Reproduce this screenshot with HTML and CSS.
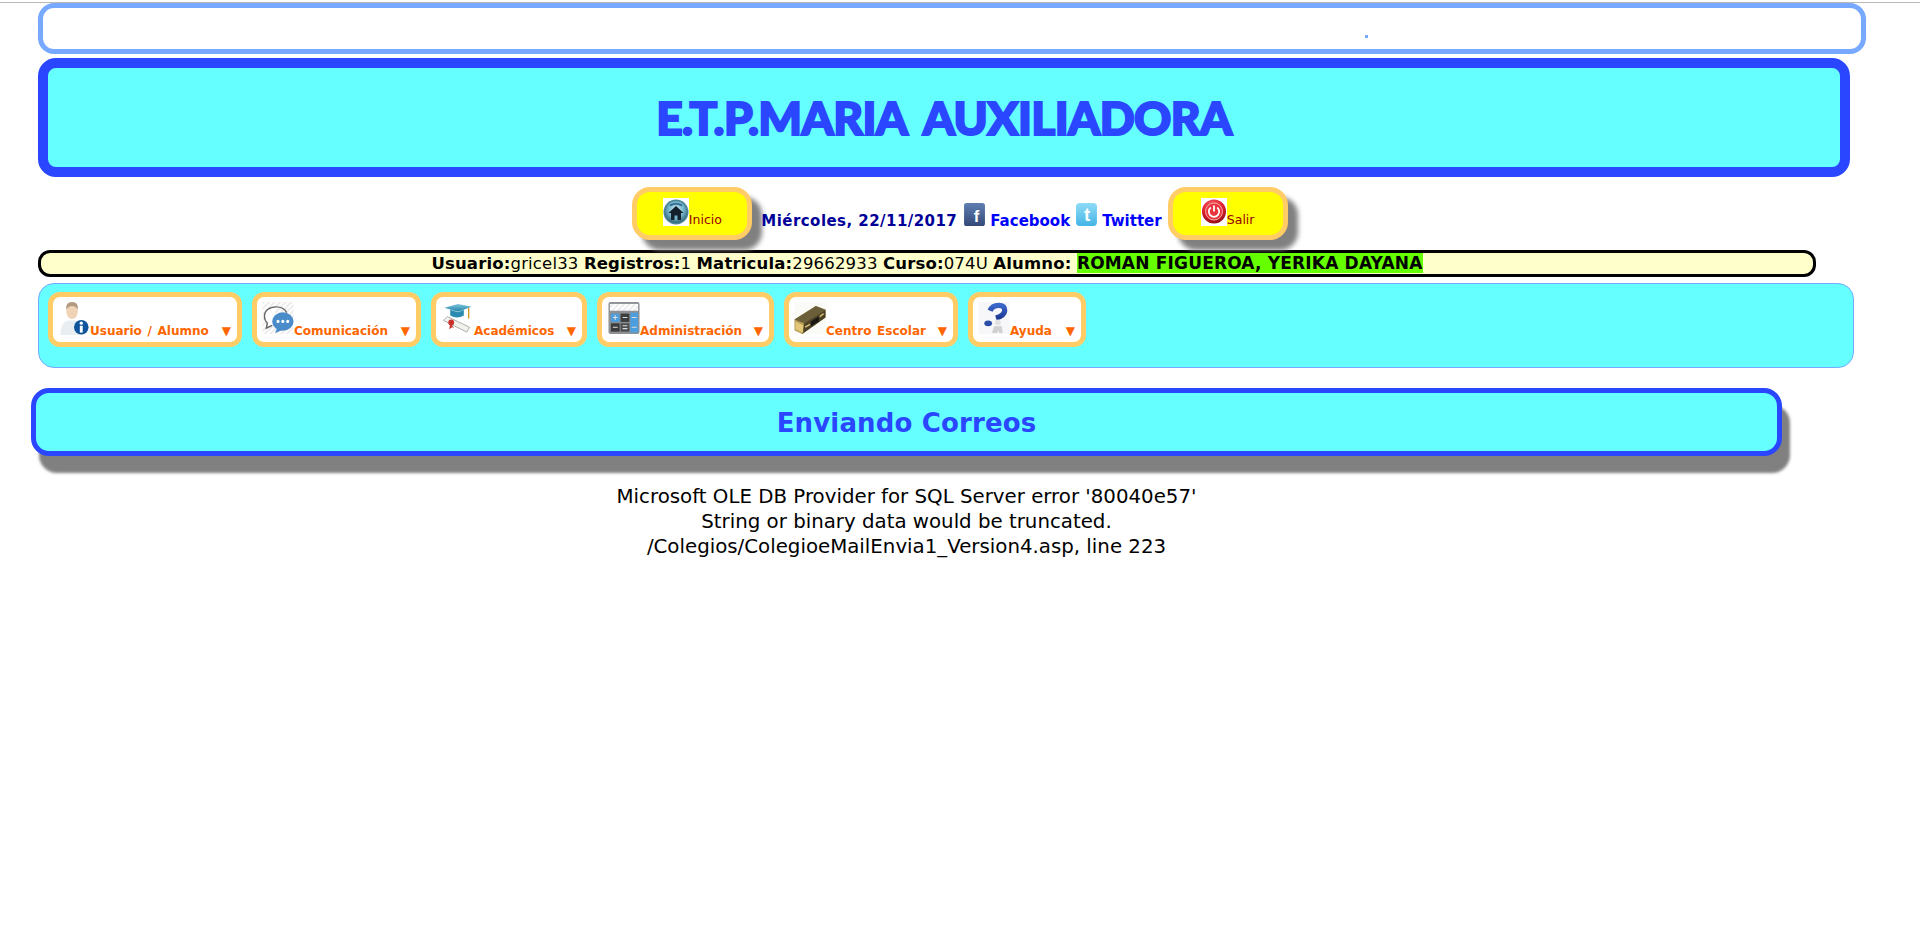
FILE: index.html
```html
<!DOCTYPE html>
<html lang="es">
<head>
<meta charset="utf-8">
<title>E.T.P. Maria Auxiliadora</title>
<link rel="stylesheet" href="styles.css">
</head>
<body>
<svg class="defs" width="0" height="0" aria-hidden="true">
  <defs>
    <radialGradient id="gHome" cx="50%" cy="40%" r="60%"><stop offset="0" stop-color="#d4eef5"/><stop offset=".6" stop-color="#6fb2c8"/><stop offset="1" stop-color="#2f6478"/></radialGradient>
    <radialGradient id="gOff" cx="45%" cy="30%" r="70%"><stop offset="0" stop-color="#f4747a"/><stop offset=".6" stop-color="#e0202c"/><stop offset="1" stop-color="#8f0d14"/></radialGradient>
    <linearGradient id="gFb" x1="0" y1="0" x2="0" y2="1"><stop offset="0" stop-color="#5f7fb0"/><stop offset="1" stop-color="#34497a"/></linearGradient>
    <linearGradient id="gTw" x1="0" y1="0" x2="0" y2="1"><stop offset="0" stop-color="#8fdcf6"/><stop offset="1" stop-color="#45b4e6"/></linearGradient>
    <linearGradient id="gCap" x1="0" y1="0" x2="0" y2="1"><stop offset="0" stop-color="#7fc8dc"/><stop offset="1" stop-color="#1f7fa6"/></linearGradient>
    <linearGradient id="gQ" x1="0" y1="0" x2="0" y2="1"><stop offset="0" stop-color="#3b66c9"/><stop offset="1" stop-color="#1c3a94"/></linearGradient>
    <pattern id="hatch" width="4" height="4" patternUnits="userSpaceOnUse" patternTransform="rotate(45)"><rect width="4" height="4" fill="#fff"/><rect width="2" height="4" fill="#ececec"/></pattern>
  </defs>
</svg>
<div class="page">
  <div class="ticker"><span class="ticker-dot"></span></div>
  <header class="banner"><h1 class="banner-title">E.T.P.MARIA AUXILIADORA</h1></header>

  <div class="toolbar">
    <a class="pill"><svg class="pill-icon" viewBox="0 0 26 28"><rect width="26" height="28" fill="#fff"/><circle cx="13" cy="14" r="12.5" fill="#4d8497"/><circle cx="13" cy="14" r="11" fill="url(#gHome)"/><path d="M13 8 5.500 15H8v7h10v-7h2.500z" fill="#14202b"/><rect x="11.500" y="17.500" width="3" height="4.500" fill="#6fb2c8"/><path d="M7 7.500q6-3.500 12 0" stroke="#2c5f8f" stroke-width="1.500" fill="none"/></svg><span class="pill-label">Inicio</span></a>
    <span class="date">Miércoles, 22/11/2017</span>
    <svg class="social social-fb" viewBox="0 0 20 22"><rect width="20" height="22" rx="2.500" fill="url(#gFb)"/><text x="12" y="18" class="social-letter" text-anchor="middle">f</text></svg>
    <a class="social-link">Facebook</a>
    <svg class="social" viewBox="0 0 20 22"><rect width="20" height="22" rx="3.500" fill="url(#gTw)"/><text x="10.500" y="17.500" class="social-letter social-letter-t" text-anchor="middle">t</text></svg>
    <a class="social-link">Twitter</a>
    <a class="pill"><svg class="pill-icon" viewBox="0 0 26 28"><rect width="26" height="28" fill="#fff"/><circle cx="13" cy="13.500" r="12" fill="url(#gOff)"/><circle cx="13" cy="13.500" r="8.500" fill="#e8353e" stroke="#f7a5a8" stroke-width="1"/><path d="M9.800 9.500a5.200 5.200 0 1 0 6.400 0" stroke="#fff" stroke-width="1.800" fill="none"/><path d="M13 7.500v6" stroke="#fff" stroke-width="1.800"/></svg><span class="pill-label">Salir</span></a>
  </div>

  <div class="userbar"><b>Usuario:</b>gricel33 <b>Registros:</b>1 <b>Matricula:</b>29662933 <b>Curso:</b>074U <b>Alumno:</b> <b class="student">ROMAN FIGUEROA, YERIKA DAYANA</b></div>

  <nav class="menu">
    <a class="menu-item item-user"><svg class="menu-icon" viewBox="0 0 32 34"><ellipse cx="14" cy="9.500" rx="6" ry="8" fill="#f0d3b6"/><path d="M8 8q-1-8 6-8t6 8q-2-4-6-4T8 8z" fill="#b09a80"/><path d="M2 34q0-14 9-15h6q9 1 9 15z" fill="#e9eef3"/><circle cx="23.500" cy="26" r="7.500" fill="#0f559e"/><circle cx="23.500" cy="21.800" r="1.700" fill="#fff"/><rect x="22" y="24.500" width="3" height="7" fill="#fff"/></svg><span class="menu-label">Usuario / Alumno</span><span class="menu-arrow">▼</span></a>
    <a class="menu-item item-comm"><svg class="menu-icon" viewBox="0 0 32 34"><rect width="32" height="33" fill="url(#hatch)"/><path d="M14 5C7 5 2 9 2 15c0 3 1 5 3 7l-1 5 6-3" fill="#fff" stroke="#666" stroke-width="1.500"/><path d="M14 5c5 0 9 2 11 6" fill="none" stroke="#666" stroke-width="1.500"/><ellipse cx="21" cy="20" rx="11" ry="9.500" fill="#4a8cc9"/><path d="M15 27l-2 5 7-3z" fill="#4a8cc9"/><circle cx="16" cy="20" r="1.600" fill="#fff"/><circle cx="21" cy="20" r="1.600" fill="#fff"/><circle cx="26" cy="20" r="1.600" fill="#fff"/></svg><span class="menu-label">Comunicación</span><span class="menu-arrow">▼</span></a>
    <a class="menu-item item-acad"><svg class="menu-icon" viewBox="0 0 32 34"><path d="M1 19l24 12 3-5-23-11z" fill="#f2f2ec" stroke="#999" stroke-width=".8"/><circle cx="9" cy="21" r="3" fill="#c9302c"/><path d="M8 22l-1 6 3-2 2 1z" fill="#c9302c"/><path d="M2 6 16 2l14 3-14 5z" fill="url(#gCap)"/><path d="M8 8v6q7 4 14 0V8l-6 2.500z" fill="#2b8ab0"/><path d="M27 6v11" stroke="#d19a1f" stroke-width="1.400"/></svg><span class="menu-label">Académicos</span><span class="menu-arrow">▼</span></a>
    <a class="menu-item item-admin"><svg class="menu-icon" viewBox="0 0 32 34"><rect width="32" height="33" rx="2" fill="#8e9296"/><rect x="1.500" y="2" width="29" height="7" fill="url(#hatch)"/><rect x="1.500" y="11" width="21" height="20.500" fill="#8a8d90"/><rect x="22.500" y="11" width="8" height="20.500" fill="#4d9ede"/><rect x="2.500" y="12" width="9" height="8.500" fill="#4d9ede"/><rect x="12.500" y="12" width="9" height="8.500" fill="#3a3c3e"/><rect x="2.500" y="22" width="9" height="8.500" fill="#3a3c3e"/><rect x="12.500" y="22" width="9" height="8.500" fill="#4a4c4e"/><path d="M4.500 16h5M7 13.700v4.600M14.500 16h5M4.500 26h5M14.500 24.500h5M14.500 27.500h5M24 16h5M24 26h5" stroke="#ddd" stroke-width="1.200"/></svg><span class="menu-label">Administración</span><span class="menu-arrow">▼</span></a>
    <a class="menu-item item-school"><svg class="menu-icon" viewBox="0 0 32 34"><rect width="32" height="33" fill="#fafaf6"/><path d="M0 18 22 4l10 4v8L8 33 0 29z" fill="#b59b52"/><path d="M0 18 22 4l10 4L10 22z" fill="#6b5f3a"/><path d="M10 22l22-14v8L8 33z" fill="#4a4128"/><path d="M1 20l8 4v8l-8-4z" fill="#e0c878"/><path d="M17 20l8-5v5l-8 5z" fill="#191712"/><path d="M11 26l5-3M26 15l4-3" stroke="#d8c070" stroke-width="1.500"/></svg><span class="menu-label">Centro Escolar</span><span class="menu-arrow">▼</span></a>
    <a class="menu-item item-help"><svg class="menu-icon" viewBox="0 0 32 34"><rect width="32" height="33" fill="#f7f7f9"/><path d="M12 9Q14 3.500 21 3.500 27.500 3.500 27 9 26.500 14 18 16.500" fill="none" stroke="url(#gQ)" stroke-width="5.500"/><ellipse cx="10" cy="22" rx="4" ry="3" fill="#2a4ea8"/><circle cx="20" cy="21" r="3" fill="#e2e2e2"/><path d="M16 25h8l1 7h-4v-3l-2 3h-5z" fill="#d0d0d0"/></svg><span class="menu-label">Ayuda</span><span class="menu-arrow">▼</span></a>
  </nav>

  <section class="heading"><h2 class="heading-title">Enviando Correos</h2></section>

  <div class="error">
    <p>Microsoft OLE DB Provider for SQL Server error '80040e57'</p>
    <p>String or binary data would be truncated.</p>
    <p>/Colegios/ColegioeMailEnvia1_Version4.asp, line 223</p>
  </div>
</div>
</body>
</html>
```

FILE: styles.css
```css
* { box-sizing: border-box; }
html, body { margin: 0; padding: 0; background: #fff; }
body { font-family: "DejaVu Sans", Verdana, sans-serif; color: #000; height: 952px; overflow: hidden; border-top: 2px solid #fff; }
.defs { position: absolute; }
.page { border-top: 1px solid #b9b9b9; padding-left: 31px; height: 950px; }

.ticker { width: 1828px; height: 51px; margin-left: 7px; border: 5px solid #76a9ff; border-radius: 16px; background: #fff; display: flex; align-items: flex-end; padding-left: 1322px; padding-bottom: 11px; }
.ticker-dot { width: 3px; height: 3px; background: #76a9ff; display: block; }

.banner { width: 1812px; height: 119px; margin: 4px 0 0 7px; border: 10px solid #2a47ff; border-radius: 18px; background: #66ffff; display: flex; align-items: center; justify-content: center; }
.banner-title { margin: 0; font-family: Lato, "DejaVu Sans", sans-serif; font-weight: 900; font-size: 46px; line-height: 1; letter-spacing: -.6px; word-spacing: 8px; -webkit-text-stroke: 2px #2a47ff; color: #2a47ff; white-space: nowrap; }

.toolbar { width: 1844px; margin: 10px 0 0 7px; display: flex; justify-content: center; align-items: flex-start; height: 63px; }
.pill { width: 120px; height: 53px; flex: none; border: 5px solid #ffcc66; border-radius: 18px; background: #ffff00; box-shadow: 10px 10px 5px #808080; display: flex; justify-content: center; align-items: flex-end; padding-bottom: 8px; }
.pill-icon { width: 26px; height: 28px; display: block; margin-bottom: 1px; }
.pill-label { font-size: 12.500px; line-height: 14px; color: #990000; font-family: "DejaVu Sans", sans-serif; }
.date { font-size: 15px; letter-spacing: .45px; font-weight: 700; color: #000099; margin: 25px 7px 0 9px; line-height: 18px; white-space: nowrap; }
.social { width: 21px; height: 23px; flex: none; margin-top: 16px; }
.social-letter { font-family: "Liberation Sans", sans-serif; font-weight: 700; font-size: 16px; fill: #fff; }
.social-letter-t { font-size: 18px; }
.social-link { font-size: 15px; font-weight: 700; color: #0000ff; margin: 25px 6px 0 5px; line-height: 18px; white-space: nowrap; }

.userbar { width: 1778px; height: 27px; margin: 0 0 0 7px; border: 3px solid #000; border-radius: 12px; background: #ffffcc; text-align: center; font-size: 16.500px; letter-spacing: .16px; line-height: 21px; white-space: nowrap; }
.student { background: #66ff00; font-size: 17px; letter-spacing: .18px; }

.menu { width: 1816px; height: 85px; margin: 6px 0 0 7px; border: 1px solid #76a9ff; border-radius: 16px; background: #66ffff; display: flex; align-items: flex-start; padding: 8px 0 0 9px; gap: 10px; }
.menu-item { height: 55px; border: 5px solid #ffcc66; border-radius: 12px; background: #fff; display: flex; align-items: flex-end; padding: 4px 6px 4px 5px; flex: none; }
.item-user { width: 194px; }
.item-comm { width: 169px; }
.item-acad { width: 156px; padding-left: 6px; }
.item-admin { width: 177px; padding-left: 6px; }
.item-school { width: 174px; }
.item-help { width: 118px; padding-left: 5px; }
.menu-icon { width: 32px; height: 33px; flex: none; display: block; margin-bottom: 3px; filter: blur(.4px); }
.menu-label { font-size: 12px; line-height: 14px; font-weight: 700; word-spacing: 1.500px; color: #ff6600; white-space: nowrap; }
.menu-arrow { margin-left: auto; font-size: 12px; line-height: 14px; color: #ff6600; font-family: "DejaVu Sans", sans-serif; }

.heading { width: 1751px; height: 68px; margin: 20px 0 0 0; padding-top: 2px; border: 5px solid #2a47ff; border-radius: 18px; background: #66ffff; box-shadow: 8px 17px 3px #808080; display: flex; align-items: center; justify-content: center; }
.heading-title { margin: 0; font-size: 26px; letter-spacing: .15px; font-weight: 700; line-height: 1; color: #2a47ff; font-family: "DejaVu Sans", sans-serif; }

.error { width: 1751px; margin-top: 28px; text-align: center; font-size: 19.800px; line-height: 25px; }
.error p { margin: 0; }
```
